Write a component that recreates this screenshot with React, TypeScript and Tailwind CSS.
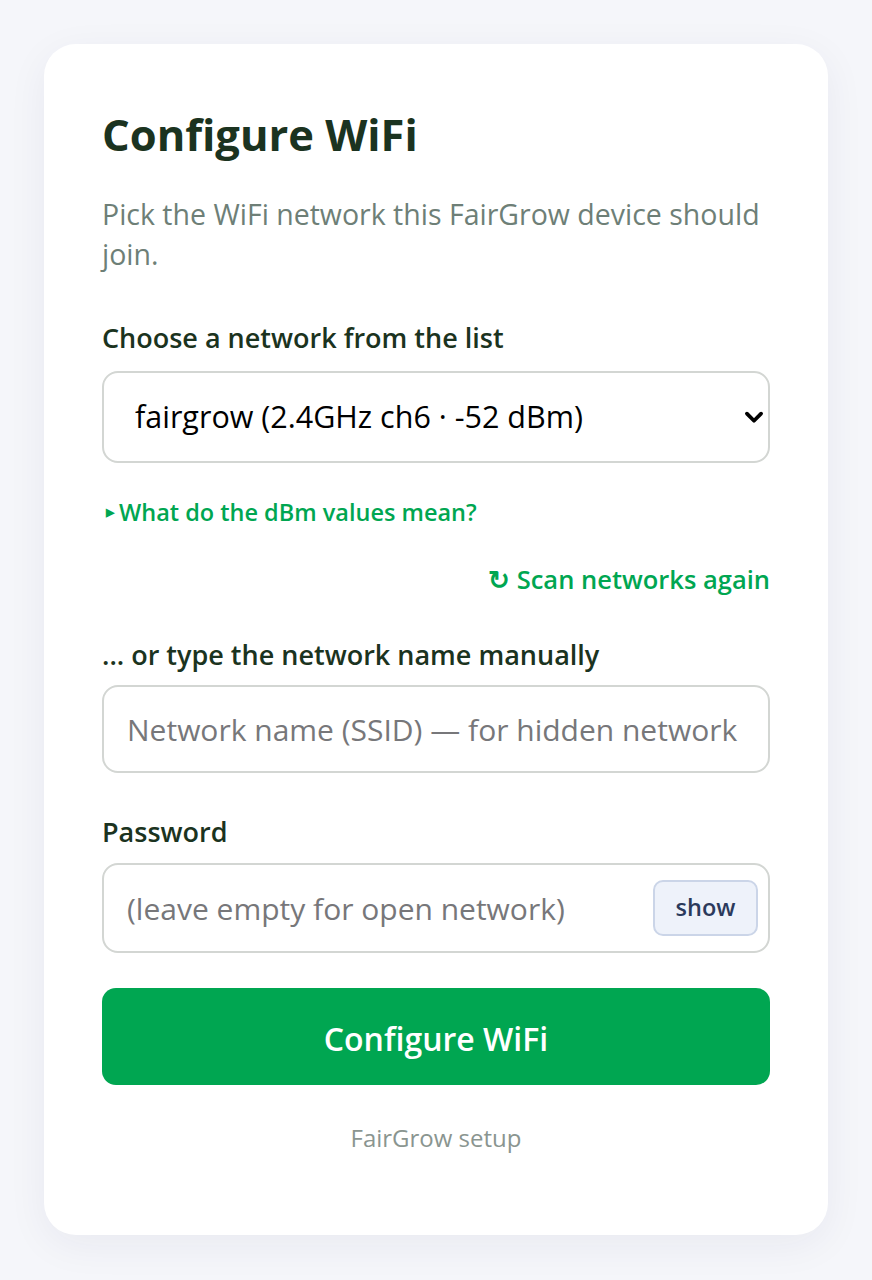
import { useState } from 'react';

const networks = [
  'fairgrow (2.4GHz ch6 · -52 dBm)',
  'FRITZ!Box 7590 (2.4GHz ch11 · -71 dBm)',
  'Gastnetz (5GHz ch36 · -80 dBm)',
];

export default function App() {
  const [showPassword, setShowPassword] = useState(false);

  return (
    <div
      className="min-h-screen bg-[#f5f6fa] px-[44px] pt-[44px] pb-[45px]"
      style={{ fontFamily: '"Open Sans", "Noto Sans", sans-serif' }}
    >
      <div className="rounded-[32px] bg-white px-[58px] pt-[63px] pb-[81px] shadow-[0_10px_40px_rgba(30,40,80,0.06)]">
        <h1 className="text-[43.5px] font-bold leading-[56px] text-[#1b3320]">
          Configure WiFi
        </h1>
        <p className="mt-[31px] text-[28.5px] leading-[40px] text-[#6e7f77]">
          Pick the WiFi network this FairGrow device should join.
        </p>

        <label className="mt-[46px] block text-[27px] font-semibold leading-[36px] text-[#1b3320]">
          Choose a network from the list
        </label>
        <div className="relative mt-[15px]">
          <select className="block h-[92px] w-full appearance-none rounded-[16px] border-2 border-[#d3d6d3] bg-white pl-[31px] pr-[60px] text-[30.5px] text-black outline-none">
            {networks.map((n) => (
              <option key={n}>{n}</option>
            ))}
          </select>
          <svg
            className="pointer-events-none absolute right-[6px] top-1/2 h-[20px] w-[20px] -translate-y-1/2"
            viewBox="0 0 24 24"
            fill="none"
            stroke="#000"
            strokeWidth="4.5"
            strokeLinecap="round"
            strokeLinejoin="round"
          >
            <path d="M3.5 8l8.5 8.5 8.5-8.5" />
          </svg>
        </div>

        <details className="mt-[33px]">
          <summary className="flex cursor-pointer list-none items-center text-[23.5px] font-semibold leading-[32px] text-[#00a651]">
            <span className="ml-[4px] mr-[5px] text-[11px]">▶</span>
            What do the dBm values mean?
          </summary>
        </details>

        <div className="mt-[34px] flex justify-end">
          <button className="text-[25.5px] font-semibold leading-[34px] text-[#00a651]">
            ↻ Scan networks again
          </button>
        </div>

        <label className="mt-[41px] block text-[27px] font-semibold leading-[36px] text-[#1b3320]">
          ... or type the network name manually
        </label>
        <input
          className="mt-[12px] block h-[88px] w-full rounded-[16px] border-2 border-[#d3d6d3] px-[23px] text-[30px] text-black outline-none placeholder:text-[#77777a]"
          placeholder="Network name (SSID) — for hidden network"
        />

        <label className="mt-[41px] block text-[27px] font-semibold leading-[36px] text-[#1b3320]">
          Password
        </label>
        <div className="mt-[13px] flex h-[90px] items-center rounded-[16px] border-2 border-[#d3d6d3] pl-[23px] pr-[10px]">
          <input
            type={showPassword ? 'text' : 'password'}
            className="min-w-0 flex-1 text-[30px] text-black outline-none placeholder:text-[#77777a]"
            placeholder="(leave empty for open network)"
          />
          <button
            onClick={() => setShowPassword(!showPassword)}
            className="h-[56px] w-[105px] rounded-[10px] border-2 border-[#cbd5e8] bg-[#eef2fa] text-[23.5px] font-semibold text-[#2b3a5c]"
          >
            show
          </button>
        </div>

        <button className="mt-[35px] block h-[97px] w-full rounded-[14px] bg-[#00a651] pt-[4px] text-[32px] font-semibold text-white">
          Configure WiFi
        </button>

        <p className="mt-[37px] text-center text-[24px] leading-[32px] text-[#8a9590]">
          FairGrow setup
        </p>
      </div>
    </div>
  );
}
